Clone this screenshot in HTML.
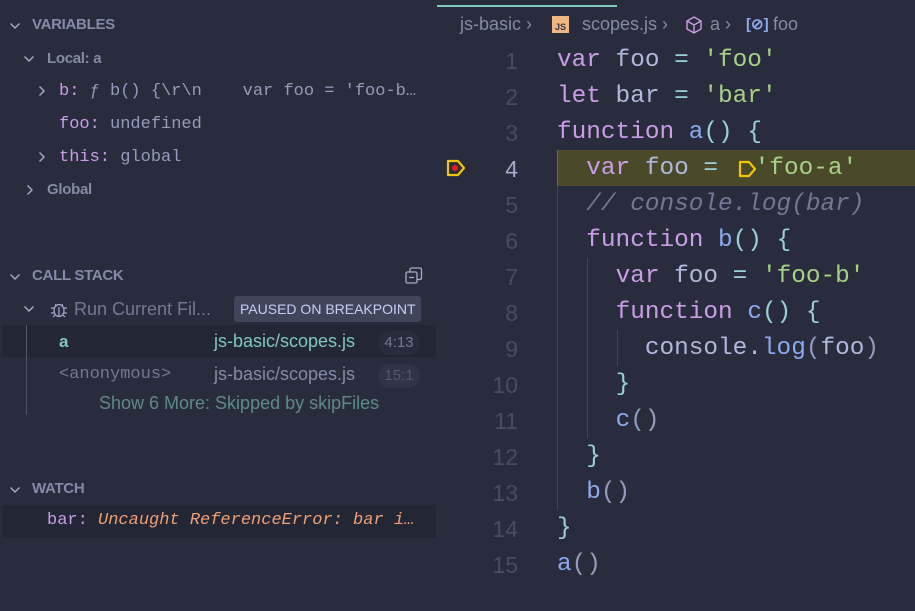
<!DOCTYPE html>
<html><head><meta charset="utf-8"><style>
*{margin:0;padding:0;box-sizing:border-box}
body{width:915px;height:611px;background:#292c3c;overflow:hidden;position:relative;font-family:"Liberation Sans",sans-serif;color:#c6d0f5}
.a{position:absolute;white-space:pre}
.h{font-weight:bold;font-size:15px;color:#838ba7;letter-spacing:-0.3px}
.m{font-family:"Liberation Mono",monospace}
.cv{position:absolute}
.code{font-family:"Liberation Mono",monospace;font-size:24.4px;line-height:36px;color:#b0b9dc}
.ln{position:absolute;left:440px;width:78px;text-align:right;color:#464c63;font-family:"Liberation Sans",sans-serif;font-size:23px;line-height:36px}
.k{color:#ca9ee6}.s{color:#a6d189}.f{color:#8caaee}.b{color:#99d1db}.p{color:#949cbb}.c{color:#737994;font-style:italic}.o{color:#99d1db}
.g{position:absolute;width:1px;background:#414559}
</style></head><body>
<svg width="0" height="0" style="position:absolute"><defs>
<symbol id="dn" viewBox="0 0 12 12"><path d="M1.5 3.5L6 8l4.5-4.5" fill="none" stroke="#a5adce" stroke-width="1.4"/></symbol>
<symbol id="rt" viewBox="0 0 12 12"><path d="M3.5 1.5L8 6l-4.5 4.5" fill="none" stroke="#a5adce" stroke-width="1.4"/></symbol>
</defs></svg>
<!-- left panel -->
<svg class="cv" style="left:9px;top:20px" width="12" height="12"><use href="#dn"/></svg>
<div class="a h" style="left:32px;top:16px">VARIABLES</div>
<svg class="cv" style="left:23px;top:53px" width="12" height="12"><use href="#dn"/></svg>
<div class="a h" style="left:47px;top:50px;font-size:15px">Local: a</div>
<svg class="cv" style="left:36px;top:85px" width="12" height="12"><use href="#rt"/></svg>
<div class="a m" style="left:59px;top:82px;font-size:17px;color:#949cbb"><span style="color:#ca9ee6">b:</span> ƒ b() {\r\n    var foo = 'foo-b…</div>
<div class="a m" style="left:59px;top:115px;font-size:17px;color:#949cbb"><span style="color:#ca9ee6">foo:</span> undefined</div>
<svg class="cv" style="left:36px;top:151px" width="12" height="12"><use href="#rt"/></svg>
<div class="a m" style="left:59px;top:148px;font-size:17px;color:#949cbb"><span style="color:#ca9ee6">this:</span> global</div>
<svg class="cv" style="left:24px;top:184px" width="12" height="12"><use href="#rt"/></svg>
<div class="a h" style="left:47px;top:181px;font-size:15px">Global</div>

<svg class="cv" style="left:9px;top:271px" width="12" height="12"><use href="#dn"/></svg>
<div class="a h" style="left:32px;top:267px">CALL STACK</div>
<svg class="a" style="left:404px;top:266px" width="20" height="20" viewBox="0 0 20 20" fill="none" stroke="#a5adce" stroke-width="1.3"><rect x="2" y="6" width="11" height="11" rx="1.5"/><path d="M6 6V3.5a1.5 1.5 0 0 1 1.5-1.5H16a1.5 1.5 0 0 1 1.5 1.5V12a1.5 1.5 0 0 1-1.5 1.5H13M5 11.5h5"/></svg>
<svg class="cv" style="left:23px;top:303px" width="12" height="12"><use href="#dn"/></svg>
<svg class="a" style="left:49px;top:299px" width="20" height="20" viewBox="0 0 20 20" fill="none" stroke="#a5adce" stroke-width="1.2"><ellipse cx="10" cy="11.5" rx="5" ry="6"/><path d="M6 5.5l2 1.5M14 5.5l-2 1.5M2 9h3M15 9h3M2 14h3M15 14h3M4 18l2-2M16 18l-2-2M10 8v9"/></svg>
<div class="a" style="left:74px;top:299px;font-size:18px;color:#737994">Run Current Fil...</div>
<div class="a" style="left:234px;top:296px;width:187px;height:26px;background:#414559;border-radius:3px;color:#c6d0f5;font-size:14px;line-height:26px;padding-left:6px">PAUSED ON BREAKPOINT</div>
<div class="a" style="left:2px;top:325px;width:434px;height:32px;background:#232634"></div>
<div class="g" style="left:26px;top:325px;height:90px;background:#51576d"></div>
<div class="a" style="left:59px;top:332px;font-size:17px;color:#81c8be;font-weight:bold">a</div>
<div class="a" style="left:214px;top:331px;font-size:18px;color:#81c8be">js-basic/scopes.js</div>
<div class="a" style="left:378px;top:331px;width:42px;height:24px;border-radius:12px;background:#292c3c;color:#737994;font-size:15px;text-align:center;line-height:24px">4:13</div>
<div class="a m" style="left:59px;top:365px;font-size:17px;color:#737994">&lt;anonymous&gt;</div>
<div class="a" style="left:214px;top:364px;font-size:18px;color:#838ba7">js-basic/scopes.js</div>
<div class="a" style="left:378px;top:364px;width:42px;height:24px;border-radius:12px;background:#303446;color:#51576d;font-size:15px;text-align:center;line-height:24px">15:1</div>
<div class="a" style="left:99px;top:393px;font-size:18px;color:#5e8a8a">Show 6 More: Skipped by skipFiles</div>

<svg class="cv" style="left:9px;top:484px" width="12" height="12"><use href="#dn"/></svg>
<div class="a h" style="left:32px;top:480px">WATCH</div>
<div class="a" style="left:2px;top:505px;width:434px;height:33px;background:#232634"></div>
<div class="a m" style="left:47px;top:511px;font-size:17px;color:#ef9f76;font-style:italic"><span style="color:#ca9ee6;font-style:normal">bar:</span> Uncaught ReferenceError: bar i…</div>

<!-- editor -->
<div class="a" style="left:437px;top:5px;width:180px;height:2px;background:#81c8be"></div>
<div class="a" style="left:460px;top:14px;font-size:18px;color:#838ba7">js-basic <span style="color:#838ba7">›</span></div>
<div class="a" style="left:552px;top:16px;width:17px;height:17px;background:#efb783;color:#303446;font-size:9px;font-weight:bold;text-align:center;line-height:22px">JS</div>
<div class="a" style="left:582px;top:14px;font-size:18px;color:#838ba7">scopes.js ›</div>
<svg class="a" style="left:684px;top:15px" width="20" height="20" viewBox="0 0 20 20" fill="none" stroke="#ca9ee6" stroke-width="1.4"><path d="M10 2l7 4v8l-7 4-7-4V6zM3 6l7 4 7-4M10 10v8"/></svg>
<div class="a" style="left:710px;top:14px;font-size:18px;color:#838ba7">a ›</div>
<div class="a" style="left:746px;top:15px;font-size:15px;color:#8caaee;font-weight:bold">[⊘]</div>
<div class="a" style="left:773px;top:14px;font-size:18px;color:#838ba7">foo</div>

<div class="a" style="left:557px;top:150px;width:358px;height:36px;background:#4a4a2a"></div>
<div class="g" style="left:557px;top:150px;height:36px;background:#737030"></div>
<div class="g" style="left:557px;top:186px;height:324px"></div>
<div class="g" style="left:587px;top:258px;height:180px"></div>
<div class="g" style="left:617px;top:330px;height:36px"></div>

<svg class="a" style="left:446px;top:159px" width="20" height="18" viewBox="0 0 20 18"><path d="M2 2h10l6 7-6 7H2z" fill="none" stroke="#f5c400" stroke-width="2.2" stroke-linejoin="round"/><circle cx="9" cy="9" r="3" fill="#e31b1b"/></svg>

<div class="ln" style="top:43px">1</div><div class="ln" style="top:79px">2</div><div class="ln" style="top:115px">3</div><div class="ln" style="top:151px;color:#a5adce">4</div><div class="ln" style="top:187px">5</div><div class="ln" style="top:223px">6</div><div class="ln" style="top:259px">7</div><div class="ln" style="top:295px">8</div><div class="ln" style="top:331px">9</div><div class="ln" style="top:367px">10</div><div class="ln" style="top:403px">11</div><div class="ln" style="top:439px">12</div><div class="ln" style="top:475px">13</div><div class="ln" style="top:511px">14</div><div class="ln" style="top:547px">15</div>

<div class="a code" style="left:557px;top:43px"><span class="k">var</span> foo <span class="o">=</span> <span class="s">'foo'</span>
<span class="k">let</span> bar <span class="o">=</span> <span class="s">'bar'</span>
<span class="k">function</span> <span class="f">a</span><span class="b">()</span> <span class="b">{</span>
  <span class="k">var</span> foo <span class="o">=</span> <span style="display:inline-block;width:22px"></span><span class="s">'foo-a'</span>
  <span class="c">// console.log(bar)</span>
  <span class="k">function</span> <span class="f">b</span><span class="b">()</span> <span class="b">{</span>
    <span class="k">var</span> foo <span class="o">=</span> <span class="s">'foo-b'</span>
    <span class="k">function</span> <span class="f">c</span><span class="b">()</span> <span class="b">{</span>
      console.<span class="f">log</span><span class="p">(</span>foo<span class="p">)</span>
    <span class="b">}</span>
    <span class="f">c</span><span class="p">()</span>
  <span class="b">}</span>
  <span class="f">b</span><span class="p">()</span>
<span class="b">}</span>
<span class="f">a</span><span class="p">()</span></div>
<svg class="a" style="left:738px;top:160px" width="20" height="18" viewBox="0 0 20 18"><path d="M2 2h9l6 7-6 7H2z" fill="none" stroke="#f5c400" stroke-width="2.2" stroke-linejoin="round"/></svg>
</body></html>
